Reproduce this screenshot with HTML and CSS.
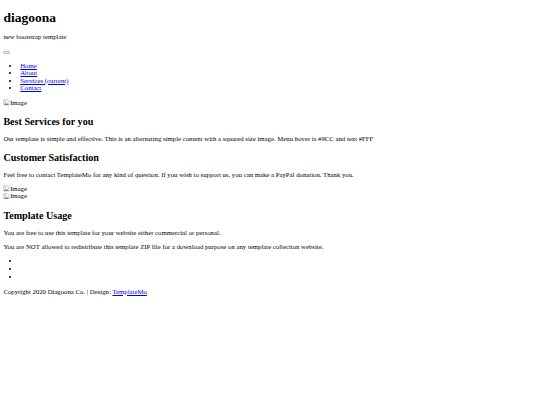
FILE: index.html
```html
<!DOCTYPE html>
<html lang="en">
<head>
<meta charset="utf-8">
<title>Diagoona</title>
<link rel="stylesheet" href="styles.css">
</head>
<body>
<header>
  <h1>diagoona</h1>
  <p>new bootstrap template</p>
</header>
<nav>
  <div class="toggle-row"><button class="toggler" type="button" aria-label="Toggle navigation"></button></div>
  <ul>
    <li><a href="#">Home</a></li>
    <li><a href="#">About</a></li>
    <li><a href="#">Services (current)</a></li>
    <li><a href="#">Contact</a></li>
  </ul>
</nav>
<main>
  <div class="img"><svg class="broken" viewBox="0 0 16 16"><path d="M1.5 1.5h9l4 4v9h-13z" fill="#f4f4f4" stroke="#9a9a9a"/><path d="M2 14l4-5 3 3 2-2 3 4z" fill="#5aa845"/><circle cx="5" cy="5" r="1.6" fill="#7fb0e0"/></svg>Image</div>
  <h2>Best Services for you</h2>
  <p>Our template is simple and effective. This is an alternating simple content with a squared size image. Menu hover is #9CC and text #FFF</p>
  <h2>Customer Satisfaction</h2>
  <p>Feel free to contact TemplateMo for any kind of question. If you wish to support us, you can make a PayPal donation. Thank you.</p>
  <div class="img"><svg class="broken" viewBox="0 0 16 16"><path d="M1.5 1.5h9l4 4v9h-13z" fill="#f4f4f4" stroke="#9a9a9a"/><path d="M2 14l4-5 3 3 2-2 3 4z" fill="#5aa845"/><circle cx="5" cy="5" r="1.6" fill="#7fb0e0"/></svg>Image</div>
  <div class="img"><svg class="broken" viewBox="0 0 16 16"><path d="M1.5 1.5h9l4 4v9h-13z" fill="#f4f4f4" stroke="#9a9a9a"/><path d="M2 14l4-5 3 3 2-2 3 4z" fill="#5aa845"/><circle cx="5" cy="5" r="1.6" fill="#7fb0e0"/></svg>Image</div>
  <h2>Template Usage</h2>
  <p>You are free to use this template for your website either commercial or personal.</p>
  <p>You are NOT allowed to redistribute this template ZIP file for a download purpose on any template collection website.</p>
</main>
<footer>
  <ul class="social">
    <li></li>
    <li></li>
    <li></li>
  </ul>
  <p>Copyright 2020 Diagoona Co. | Design: <a href="#">TemplateMo</a></p>
</footer>
</body>
</html>
```

FILE: styles.css
```css
html {
  background: #fff;
}
body {
  margin: 3.375px;
  font-family: "Liberation Serif", "Times New Roman", serif;
  font-size: 6.75px;
  line-height: 1.12;
  color: #000;
}
h1 {
  font-size: 2em;
  margin: 7px 0 7.5px;
}
h2 {
  font-size: 1.5em;
  margin: 9.6px 0 7.6px;
}
p {
  margin: 1em 0;
}
ul {
  margin: 1em 0;
  padding-left: 16.875px;
}
a {
  color: #0000ee;
  text-decoration: underline;
}
.toggler {
  display: inline-block;
  width: 7px;
  height: 3px;
  padding: 0;
  border: 0.5px solid #c4c4c4;
  border-radius: 1px;
  background: #e6e6e6;
  vertical-align: baseline;
}
.broken {
  width: 6.75px;
  height: 6.75px;
  vertical-align: -1px;
}
.social li {
  min-height: 8px;
}
```
